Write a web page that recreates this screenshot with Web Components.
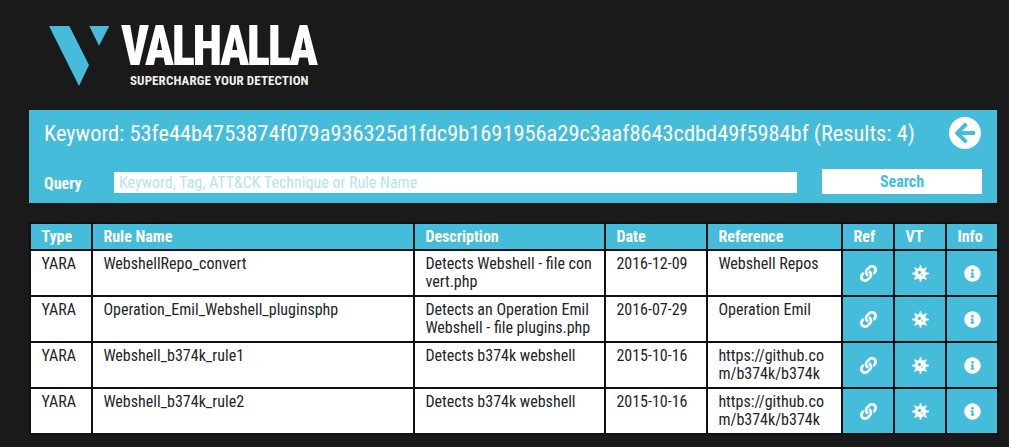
<!DOCTYPE html>
<html>
<head>
<meta charset="utf-8">
<style>
  html, body { margin: 0; padding: 0; background: #1a1a1a; }
  body { font-family: Roboto, "Liberation Sans", sans-serif; font-stretch: 75%; }
</style>
</head>
<body>
<valhalla-page>
  <valhalla-logo></valhalla-logo>
  <search-panel keyword="53fe44b4753874f079a936325d1fdc9b1691956a29c3aaf8643cdbd49f5984bf" results="4"></search-panel>
  <rule-table></rule-table>
</valhalla-page>
<script>
class ValhallaPage extends HTMLElement {
  constructor() {
    super();
    this.attachShadow({ mode: "open" });
    this.shadowRoot.innerHTML = `
      <style>
        :host { display: block; padding: 0 10px 0 29px; }
      </style>
      <slot></slot>
    `;
  }
}

class ValhallaLogo extends HTMLElement {
  constructor() {
    super();
    this.attachShadow({ mode: "open" });
    this.shadowRoot.innerHTML = `
      <style>
        :host { display: flex; height: 110px; padding: 26px 0 0 20px; box-sizing: border-box; color: #fff; }
        svg { width: 61px; height: 60px; flex: none; }
        .words { margin-left: 11px; display: flex; flex-direction: column; }
        .name { font: 900 56px/40px Roboto, sans-serif; font-stretch: 75%; letter-spacing: -2.500px; height: 40px; transform: scaleX(.855); transform-origin: 0 0; white-space: nowrap; }
        .tag { font: 700 13px/14px Roboto, sans-serif; font-stretch: 75%; letter-spacing: .1px; margin: 8px 0 0 9px; color: #eee; white-space: nowrap; }
      </style>
      <svg viewBox="0 0 61 60"><path fill="#45bcd9" d="M0 0H20.300L40 39 30 60Z M40.300 0H60.300L50 19.700Z"/></svg>
      <div class="words">
        <div class="name">VALHALLA</div>
        <div class="tag">SUPERCHARGE YOUR DETECTION</div>
      </div>
    `;
  }
}

class SearchPanel extends HTMLElement {
  constructor() {
    super();
    this.attachShadow({ mode: "open" });
  }

  connectedCallback() {
    this.shadowRoot.innerHTML = `
      <style>
        :host { display: block; width: 968px; height: 93px; padding: 7px 15px 0; box-sizing: border-box; background: #45bcd9; color: #fff; }
        .top { display: flex; justify-content: space-between; align-items: center; height: 32px; }
        .title { font-size: 22.400px; white-space: nowrap; }
        .back { width: 32px; height: 32px; margin-right: 1px; }
        .query { display: flex; align-items: center; margin-top: 20px; height: 25px; }
        label { font-size: 16px; font-weight: 700; width: 70px; padding-top: 4px; }
        .input { width: 683px; height: 21px; background: #fff; color: #b5e4f0; font-size: 16px; line-height: 21px; padding-left: 5px; box-sizing: border-box; margin-top: 1px; }
        .btn { margin-left: 25px; width: 160px; height: 25px; background: #fff; color: #45bcd9; font-size: 16px; font-weight: 700; text-align: center; line-height: 25px; }
      </style>
      <div class="top">
        <div class="title">Keyword: ${this.getAttribute("keyword")} (Results: ${this.getAttribute("results")})</div>
        <svg class="back" viewBox="8 8 496 496">
          <path fill="#fff" d="M256 504C119 504 8 393 8 256S119 8 256 8s248 111 248 248-111 248-248 248zm28.900-143.600L209.400 288H392c13.300 0 24-10.700 24-24v-16c0-13.300-10.700-24-24-24H209.400l75.500-72.400c9.700-9.300 9.900-24.800.4-34.300l-11-10.900c-9.400-9.400-24.600-9.400-33.900 0L107.700 239c-9.400 9.400-9.400 24.600 0 33.900l132.700 132.700c9.400 9.400 24.600 9.400 33.900 0l11-10.900c9.500-9.500 9.300-25-.4-34.300z"/>
        </svg>
      </div>
      <div class="query">
        <label>Query</label>
        <div class="input">Keyword, Tag, ATT&amp;CK Technique or Rule Name</div>
        <div class="btn">Search</div>
      </div>
    `;
  }
}

const LINK_ICON = `<svg viewBox="0 0 512 512" width="17" height="17"><path fill="#fff" d="M326.600 185.400c59.700 59.800 58.900 155.700.4 214.600l-67.200 67.200c-59.300 59.300-155.700 59.300-215 0s-59.300-155.700 0-215l37.100-37.100c9.800-9.800 26.800-3.300 27.300 10.600.6 17.700 3.800 35.500 9.700 52.700 2 5.800.6 12.300-3.800 16.600l-13.100 13.100c-28 28-28.900 73.700-1.200 102 28 28.600 74.100 28.700 102.300.5l67.200-67.200c28.200-28.200 28.100-73.800 0-101.800-3.700-3.700-7.400-6.600-10.300-8.600-5-3.400-8-9.100-8.300-15.100-.4-11.400 3.600-23.200 12.600-32.200l21-21c5.500-5.500 14.200-6.200 20.600-1.700 7.300 5.100 14.200 10.900 20.600 17.300zm140.900-140.900c-59.300-59.300-155.700-59.300-215 0l-67.200 67.200-.4.400c-58.500 58.900-59.300 154.800.4 214.600 6.400 6.400 13.300 12.200 20.600 17.300 6.400 4.500 15.100 3.800 20.600-1.700l21-21c9-9 13-20.800 12.600-32.200-.3-6-3.300-11.700-8.300-15.100-2.900-2-6.600-4.900-10.300-8.600-28.100-28-28.200-73.600 0-101.800l67.200-67.200c28.200-28.200 74.300-28.100 102.300.5 27.700 28.300 26.800 74-1.200 102l-13.100 13.100c-4.400 4.300-5.800 10.800-3.800 16.600 5.900 17.200 9.100 35 9.700 52.700.5 13.900 17.500 20.400 27.300 10.600l37.100-37.100c59.300-59.300 59.300-155.700 0-215z"/></svg>`;
const VIRUS_ICON = `<svg viewBox="0 0 512 512" width="17" height="17"><path fill="#fff" fill-rule="evenodd" d="M483.550 227.550H462c-50.680 0-76.070-61.270-40.230-97.110L437 115.190A28.440 28.440 0 0 0 396.800 75L381.560 90.220c-35.840 35.830-97.110 10.450-97.110-40.230V28.440a28.450 28.450 0 0 0-56.900 0V50c0 50.680-61.270 76.060-97.110 40.230L115.200 75A28.440 28.440 0 0 0 75 115.190l15.250 15.250c35.840 35.840 10.450 97.110-40.230 97.110H28.450a28.450 28.450 0 1 0 0 56.890H50c50.680 0 76.070 61.280 40.230 97.120L75 396.800A28.450 28.450 0 0 0 115.200 437l15.240-15.250c35.840-35.840 97.110-10.450 97.110 40.230v21.540a28.450 28.450 0 0 0 56.900 0V462c0-50.680 61.270-76.070 97.110-40.230L396.800 437A28.450 28.450 0 0 0 437 396.800l-15.250-15.240c-35.840-35.840-10.450-97.120 40.230-97.120h21.540a28.450 28.450 0 1 0 0-56.890ZM224 272a48 48 0 1 1 48-48A48 48 0 0 1 224 272Zm80 56a24 24 0 1 1 24-24A24 24 0 0 1 304 328Z"/></svg>`;
const INFO_ICON = `<svg viewBox="0 0 512 512" width="17" height="17"><path fill="#fff" d="M256 8C119.043 8 8 119.083 8 256c0 136.997 111.043 248 248 248s248-111.003 248-248C504 119.083 392.957 8 256 8zm0 110c23.196 0 42 18.804 42 42s-18.804 42-42 42-42-18.804-42-42 18.804-42 42-42zm56 254c0 6.627-5.373 12-12 12h-88c-6.627 0-12-5.373-12-12v-24c0-6.627 5.373-12 12-12h12v-64h-12c-6.627 0-12-5.373-12-12v-24c0-6.627 5.373-12 12-12h64c6.627 0 12 5.373 12 12v100h12c6.627 0 12 5.373 12 12v24z"/></svg>`;

class RuleTable extends HTMLElement {
  constructor() {
    super();
    this.attachShadow({ mode: "open" });
  }

  connectedCallback() {
    const rows = [
      ["YARA", "WebshellRepo_convert", "Detects Webshell - file con<br>vert.php", "2016-12-09", "Webshell Repos"],
      ["YARA", "Operation_Emil_Webshell_pluginsphp", "Detects an Operation Emil<br>Webshell - file plugins.php", "2016-07-29", "Operation Emil"],
      ["YARA", "Webshell_b374k_rule1", "Detects b374k webshell", "2015-10-16", "https://github.co<br>m/b374k/b374k"],
      ["YARA", "Webshell_b374k_rule2", "Detects b374k webshell", "2015-10-16", "https://github.co<br>m/b374k/b374k"],
    ];
    const heads = ["Type", "Rule Name", "Description", "Date", "Reference", "Ref", "VT", "Info"];
    const icons = [LINK_ICON, VIRUS_ICON, INFO_ICON];

    this.shadowRoot.innerHTML = `
      <style>
        :host { display: grid; grid-template-columns: 60px 320px 189px 100px 133px 50px 50px 50px; gap: 2px;
          width: 970px; margin-top: 19px; padding: 2px; box-sizing: border-box; background: #111; font-size: 16px; }
        .h { height: 25px; padding-left: 10.400px; background: #45bcd9; color: #fff; font-weight: 700; line-height: 25px; }
        .c { height: 44px; padding: 4px 0 0 10.400px; box-sizing: border-box; background: #fff; color: #212529; line-height: 18.400px; white-space: nowrap; }
        .i { height: 44px; background: #45bcd9; display: flex; align-items: center; justify-content: center; }
      </style>
      ${heads.map((h) => `<div class="h">${h}</div>`).join("")}
      ${rows.map((r) => r.map((c) => `<div class="c">${c}</div>`).join("") + icons.map((i) => `<div class="i">${i}</div>`).join("")).join("")}
    `;
  }
}

customElements.define("valhalla-page", ValhallaPage);
customElements.define("valhalla-logo", ValhallaLogo);
customElements.define("search-panel", SearchPanel);
customElements.define("rule-table", RuleTable);
</script>
</body>
</html>
